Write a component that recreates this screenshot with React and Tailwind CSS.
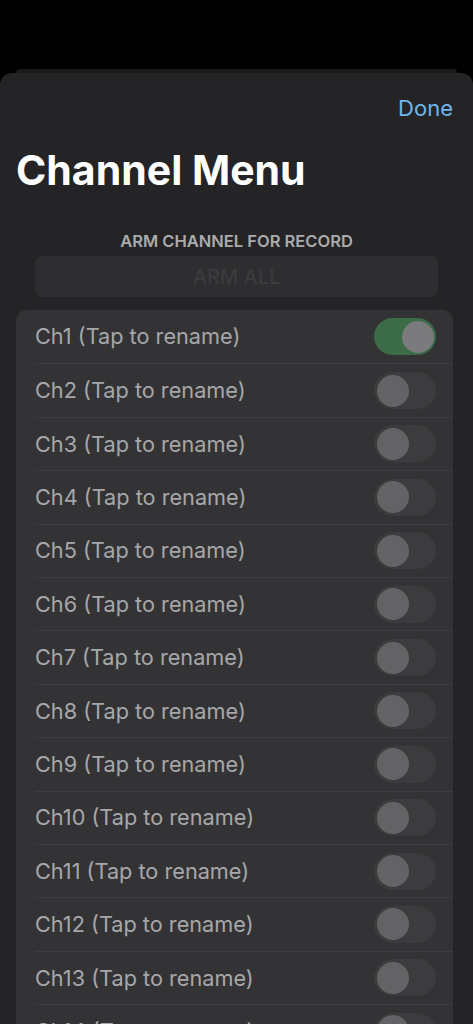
const channels = Array.from({ length: 14 }, (_, i) => ({ id: i + 1, armed: i === 0 }));

const Toggle = ({ on }) => (
  <div
    className={`w-[62px] h-[37px] rounded-full p-[2.5px] flex items-center ${
      on ? "bg-[#3b6b47] justify-end" : "bg-[#3c3c3e] justify-start"
    }`}
  >
    <div className={`size-[32px] rounded-full ${on ? "bg-[#7b7b7d]" : "bg-[#636365]"}`} />
  </div>
);

export default function App() {
  return (
    <div className="h-[1024px] overflow-hidden bg-black font-['Inter',sans-serif]">
      <div className="pt-[69px]">
        {/* card behind the sheet */}
        <div className="mx-4 h-[4px] rounded-t-lg bg-[#1a1a1b]" />
        <div className="rounded-t-[12px] bg-[#242426] h-[960px]">
          <div className="flex justify-end pr-[20px] pt-[21px]">
            <button className="text-[22px] leading-[28px] text-[#6db6ee]">Done</button>
          </div>

          <h1 className="px-4 mt-[24px] text-[41px] leading-[48px] font-bold text-white">
            Channel Menu
          </h1>

          <p className="mt-[38px] text-center text-[16.5px] leading-[18px] font-semibold text-[#ababad]">
            ARM CHANNEL FOR RECORD
          </p>

          <div className="mx-[35px] mt-[6px] h-[41px] rounded-lg bg-[#2e2e30] flex items-center justify-center">
            <span className="text-[20px] font-medium text-[#3b3b3d]">ARM ALL</span>
          </div>

          <div className="ml-4 mr-[20px] mt-[13px] rounded-[10px] bg-[#333335] overflow-hidden">
            {channels.map((ch, i) => (
              <div key={ch.id} className="pl-[19px]">
                <div
                  className={`h-[53.4px] flex items-center justify-between pr-[17px] ${
                    i > 0 ? "border-t border-[#3d3d3f]" : ""
                  }`}
                >
                  <span className="text-[21.7px] text-[#a7a7a9]">Ch{ch.id} (Tap to rename)</span>
                  <Toggle on={ch.armed} />
                </div>
              </div>
            ))}
          </div>
        </div>
      </div>
    </div>
  );
}
